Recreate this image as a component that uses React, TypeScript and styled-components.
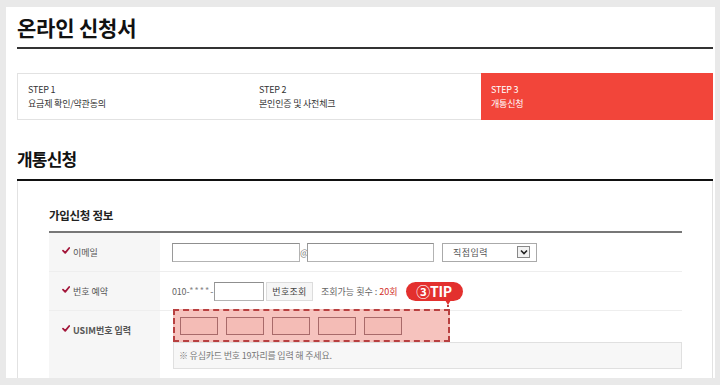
import React from "react";
import styled, { createGlobalStyle } from "styled-components";

const Global = createGlobalStyle`
  html, body { margin: 0; padding: 0; background: #e9e9e9; }
  body { font-family: "Noto Sans CJK KR", "Noto Sans", sans-serif; }
  * { box-sizing: border-box; }
`;

const Page = styled.div`
  padding: 7px 0 0 6px;
  height: 385px;
  overflow: hidden;
`;

const Panel = styled.div`
  width: 709px;
  height: 371px;
  background: #fff;
  padding: 0 2px 0 11px;
  overflow: hidden;
`;

const Title = styled.h1`
  margin: 0;
  padding: 5px 0;
  font-size: 21px;
  line-height: 30px;
  font-weight: 700;
  color: #111;
  letter-spacing: -0.2px;
  border-bottom: 2px solid #333;
`;

const Steps = styled.div`
  margin-top: 24px;
  display: grid;
  grid-template-columns: repeat(3, 1fr);
  height: 47px;
`;

const Step = styled.div<{ $active?: boolean; $first?: boolean }>`
  display: flex;
  flex-direction: column;
  padding: ${(p) => (p.$active ? "10px 0 0 10px" : "9px 0 0 10px")};
  background: ${(p) => (p.$active ? "#f2453a" : "#fff")};
  border-top: ${(p) => (p.$active ? "none" : "1px solid #e2e2e2")};
  border-bottom: ${(p) => (p.$active ? "none" : "1px solid #e2e2e2")};
  border-left: ${(p) => (p.$first ? "1px solid #e2e2e2" : "none")};
  color: ${(p) => (p.$active ? "#fff" : "#333")};
  font-size: 9px;
  line-height: 14px;
`;

const StepNum = styled.span`
  font-weight: 400;
  letter-spacing: -0.2px;
`;

const StepName = styled.span`
  letter-spacing: -0.2px;
`;

const Heading = styled.h2`
  margin: 26px 0 0;
  padding-bottom: 8px;
  font-size: 17px;
  line-height: 25px;
  font-weight: 700;
  color: #111;
  letter-spacing: -0.8px;
  border-bottom: 2px solid #111;
`;

const FormBox = styled.div`
  border-left: 1px solid #e2e2e2;
  border-right: 1px solid #e2e2e2;
  padding: 0 30px 0 31px;
  height: 220px;
`;

const SubTitle = styled.h3`
  margin: 0;
  padding: 25px 0 7px;
  font-size: 11.5px;
  line-height: 18px;
  font-weight: 700;
  color: #222;
  letter-spacing: -0.3px;
  border-bottom: 2px solid #777;
`;

const Row = styled.div<{ $h: number; $last?: boolean }>`
  display: grid;
  grid-template-columns: 111px 1fr;
  height: ${(p) => p.$h}px;
  border-bottom: ${(p) => (p.$last ? "none" : "1px solid #eeeeee")};
`;

const LabelCell = styled.div<{ $bold?: boolean }>`
  background: #f6f6f6;
  padding: 10px 0 0 13px;
  display: flex;
  align-items: flex-start;
  gap: 3px;
  font-size: 9px;
  line-height: 20px;
  color: #555;
  font-weight: ${(p) => (p.$bold ? 700 : 400)};
`;

const Check = styled.svg`
  width: 8px;
  height: 7px;
  margin-top: 4px;
`;

const ValueCell = styled.div`
  display: flex;
  align-items: center;
  padding-left: 12px;
  font-size: 9px;
  color: #666;
`;

const UsimCell = styled.div`
  display: flex;
  flex-direction: column;
  align-items: flex-start;
  padding-left: 13px;
`;

const TextInput = styled.input<{ $w: number }>`
  width: ${(p) => p.$w}px;
  height: 19px;
  margin: 0;
  padding: 0 4px;
  border: 1px solid #b3b3b3;
  border-top-color: #8f8f8f;
  border-left-color: #9a9a9a;
  background: #fff;
  outline: none;
`;

const At = styled.span`
  width: 7px;
  text-align: center;
  font-size: 9px;
  color: #777;
`;

const FakeSelect = styled.div`
  margin-left: 8px;
  width: 95px;
  height: 19px;
  border: 1px solid #aaa;
  display: flex;
  align-items: center;
  justify-content: space-between;
  padding: 0 6px 0 10px;
  font-size: 9px;
  color: #555;
  letter-spacing: 0.5px;
`;

const ArrowBox = styled.span`
  width: 13px;
  height: 12px;
  border: 1px solid #888;
  background: #f2f2f2;
  display: flex;
  align-items: center;
  justify-content: center;
`;

const Prefix = styled.span`
  width: 42px;
  color: #666;
  font-size: 9px;
  white-space: nowrap;
  letter-spacing: -0.2px;
`;

const Stars = styled.span`
  font-size: 9px;
  letter-spacing: 1px;
  vertical-align: 1px;
  color: #888;
`;

const Button = styled.button`
  margin: 0 0 0 2px;
  width: 47px;
  height: 19px;
  padding: 0;
  border: 1px solid #dcdcdc;
  background: #f6f6f6;
  font-family: inherit;
  font-size: 9px;
  color: #444;
  letter-spacing: 0.3px;
`;

const Count = styled.span`
  margin-left: 8px;
  color: #666;
  white-space: nowrap;
`;

const Red = styled.span`
  color: #d2302b;
`;

const Badge = styled.span`
  position: relative;
  margin-left: 8px;
  width: 57px;
  height: 19px;
  border-radius: 10px;
  background: #e3302e;
  color: #fff;
  font-size: 14px;
  font-weight: 700;
  line-height: 19px;
  display: inline-flex;
  justify-content: center;
  align-items: center;
  letter-spacing: -0.3px;

  &::after {
    content: "";
    position: absolute;
    right: 12px;
    bottom: -4px;
    border-left: 3px solid transparent;
    border-right: 3px solid transparent;
    border-top: 5px solid #e3302e;
  }

  &::before {
    content: "";
    position: absolute;
    right: 14px;
    top: 100%;
    height: 10px;
    border-left: 2px dotted #b84040;
  }
`;

const UsimBox = styled.div`
  margin-top: -2px;
  width: 277px;
  height: 33px;
  border: 2px dashed #b84040;
  background: #f6c3be;
  padding: 6px 0 0 5px;
  display: flex;
  gap: 8px;
`;

const UsimField = styled.span`
  width: 38px;
  height: 18px;
  border: 1px solid #a86a6a;
  background: #f4bcb6;
`;

const Note = styled.div`
  width: 509px;
  height: 27px;
  background: #f7f7f7;
  border: 1px solid #e0e0e0;
  padding-left: 5px;
  font-size: 9px;
  line-height: 25px;
  color: #777;
  letter-spacing: -0.2px;
`;

const CheckMark = () => (
  <Check viewBox="0 0 8 7">
    <path d="M1 3.6 L3.2 5.8 L7.2 1" fill="none" stroke="#a3163a" strokeWidth="1.8" strokeLinecap="round" strokeLinejoin="round" />
  </Check>
);

export default function App() {
  return (
    <>
      <Global />
      <Page>
        <Panel>
          <Title>온라인 신청서</Title>
          <Steps>
            <Step $first>
              <StepNum>STEP 1</StepNum>
              <StepName>요금제 확인/약관동의</StepName>
            </Step>
            <Step>
              <StepNum>STEP 2</StepNum>
              <StepName>본인인증 및 사전체크</StepName>
            </Step>
            <Step $active>
              <StepNum>STEP 3</StepNum>
              <StepName>개통신청</StepName>
            </Step>
          </Steps>
          <Heading>개통신청</Heading>
          <FormBox>
            <SubTitle>가입신청 정보</SubTitle>
            <Row $h={39}>
              <LabelCell>
                <CheckMark />
                <span>이메일</span>
              </LabelCell>
              <ValueCell>
                <TextInput $w={128} />
                <At>@</At>
                <TextInput $w={127} />
                <FakeSelect>
                  <span>직접입력</span>
                  <ArrowBox>
                    <svg width="8" height="6" viewBox="0 0 8 6">
                      <path d="M1 1.5 L4 4.5 L7 1.5" fill="none" stroke="#222" strokeWidth="1.6" />
                    </svg>
                  </ArrowBox>
                </FakeSelect>
              </ValueCell>
            </Row>
            <Row $h={39}>
              <LabelCell>
                <CheckMark />
                <span>번호 예약</span>
              </LabelCell>
              <ValueCell>
                <Prefix>
                  010-<Stars>****</Stars>-
                </Prefix>
                <TextInput $w={50} />
                <Button>번호조회</Button>
                <Count>
                  조회가능 횟수 : <Red>20회</Red>
                </Count>
                <Badge>③TIP</Badge>
              </ValueCell>
            </Row>
            <Row $h={70} $last>
              <LabelCell $bold>
                <CheckMark />
                <span>USIM번호 입력</span>
              </LabelCell>
              <UsimCell>
                <UsimBox>
                  <UsimField />
                  <UsimField />
                  <UsimField />
                  <UsimField />
                  <UsimField />
                </UsimBox>
                <Note>※ 유심카드 번호 19자리를 입력 해 주세요.</Note>
              </UsimCell>
            </Row>
          </FormBox>
        </Panel>
      </Page>
    </>
  );
}
